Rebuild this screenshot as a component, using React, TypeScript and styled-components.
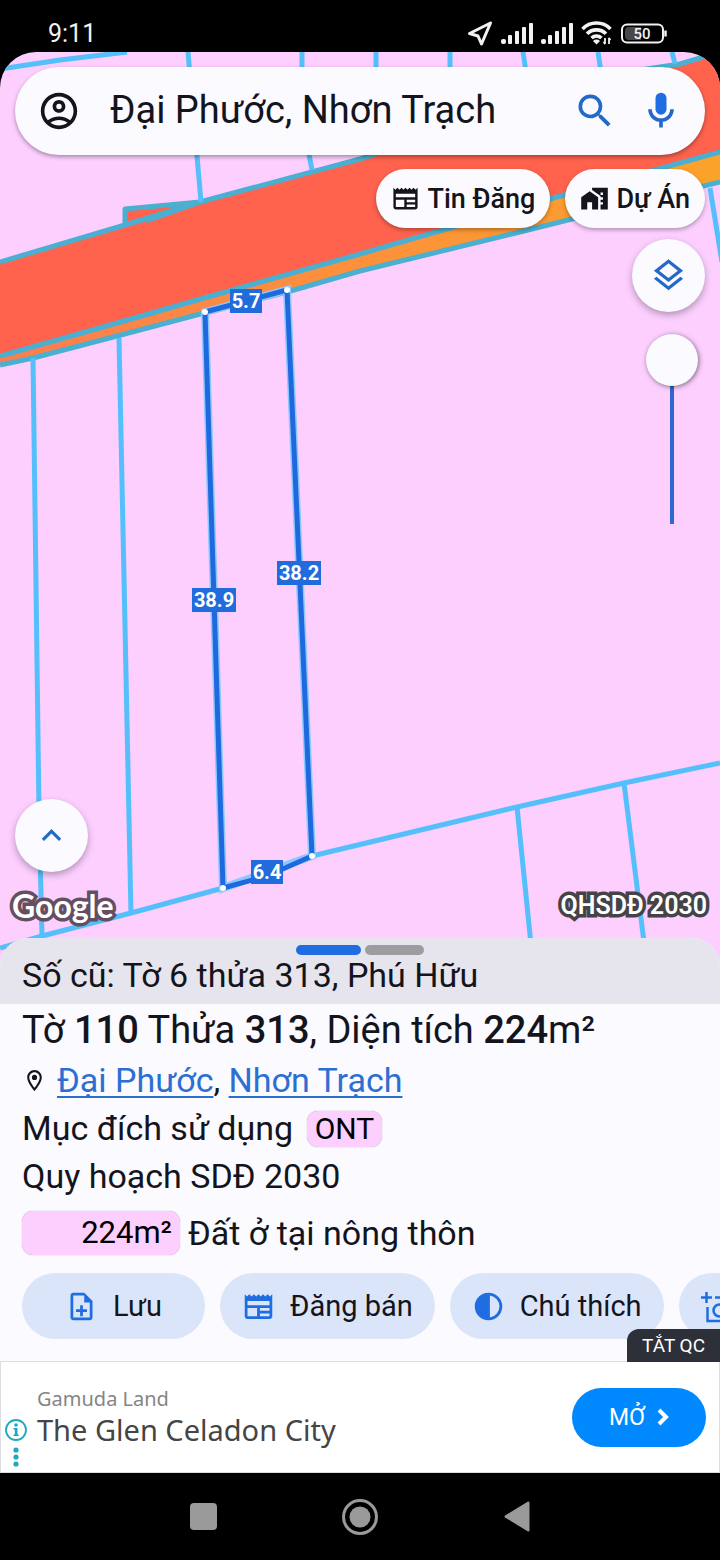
import React from "react";
import styled, { createGlobalStyle } from "styled-components";

const ink = "#14151c";
const blue = "#1f6de0";
const surface = "#fbfaff";

const GlobalStyle = createGlobalStyle`
  *, *::before, *::after { box-sizing: border-box; }
  body { margin: 0; background: #000; color: ${ink}; font-family: Roboto, "Noto Sans", sans-serif; }
  button, input { font: inherit; color: inherit; margin: 0; }
  button { border: 0; padding: 0; cursor: pointer; }
  svg { display: block; flex: none; }
`;

const Screen = styled.div`
  display: flex;
  flex-direction: column;
  min-height: 100vh;
  background: #000;
  overflow-x: hidden;
`;

const StatusBar = styled.header`
  display: flex;
  align-items: center;
  justify-content: space-between;
  height: 52px;
  padding: 14px 52px 0 48px;
  color: #f2f2f2;
`;

const Clock = styled.time`
  padding-top: 2px;
  font-size: 25px;
  line-height: 26px;
`;

const StatusIcons = styled.div`
  display: flex;
  align-items: center;
  gap: 8px;
`;

const MapArea = styled.main`
  position: relative;
  display: flex;
  flex: 1;
  flex-direction: column;
  min-height: 720px;
  padding: 15px 15px 0;
  border-radius: 36px 36px 0 0;
  overflow: hidden;
  background: #fdcfff;
`;

const MapDrawing = styled.svg`
  position: absolute;
  inset: 0;
  width: 100%;
  height: 100%;
`;

const MapTools = styled.div`
  position: relative;
  display: flex;
  flex: 1;
  flex-direction: column;
`;

const SearchBar = styled.form`
  display: flex;
  align-items: center;
  height: 88px;
  padding: 0 22px 0 24px;
  border-radius: 44px;
  background: ${surface};
  box-shadow: 0 2px 4px rgba(0, 0, 0, 0.35);
`;

const SearchInput = styled.input`
  flex: 1;
  min-width: 0;
  height: 56px;
  margin: 0 16px 0 31px;
  padding: 0 0 2px;
  border: 0;
  outline: 0;
  background: transparent;
  font-size: 38px;
`;

const PlainButton = styled.button<{ $gap?: number }>`
  display: flex;
  margin-left: ${(p) => p.$gap ?? 0}px;
  background: transparent;
  color: ${(p) => (p.$gap === undefined ? ink : "#2469c8")};
`;

const FilterRow = styled.div`
  display: flex;
  justify-content: flex-end;
  gap: 15px;
  margin-top: 14px;
`;

const FilterButton = styled.button`
  display: flex;
  align-items: center;
  gap: 7px;
  height: 59px;
  padding: 0 15px;
  border-radius: 30px;
  background: ${surface};
  box-shadow: 0 2px 4px rgba(0, 0, 0, 0.3);
  font-size: 27px;
  font-weight: 500;
`;

const RoundButton = styled.button`
  display: grid;
  place-items: center;
  width: 73px;
  height: 73px;
  border-radius: 50%;
  background: ${surface};
  color: #2469c8;
  box-shadow: 0 3px 7px rgba(0, 0, 0, 0.3);
`;

const SideTools = styled.div`
  display: flex;
  flex-direction: column;
  align-items: flex-end;
  gap: 22px;
  margin-top: 11px;
`;

const OpacitySlider = styled.input`
  appearance: none;
  writing-mode: vertical-lr;
  direction: rtl;
  width: 52px;
  height: 190px;
  margin-right: 7px;
  background: linear-gradient(#2f67cf, #2f67cf) center / 4px 100% no-repeat;
  border-radius: 2px;

  &::-webkit-slider-thumb {
    appearance: none;
    width: 52px;
    height: 52px;
    border-radius: 50%;
    background: ${surface};
    box-shadow: 1px 1px 5px rgba(0, 0, 0, 0.5);
  }
`;

const MapFooter = styled.div`
  display: flex;
  flex-direction: column;
  align-items: flex-start;
  margin-top: auto;
  padding-bottom: 48px;
`;

const Attribution = styled.div`
  display: flex;
  align-items: center;
  justify-content: space-between;
  align-self: stretch;
  height: 40px;
  margin: 14px -2px 0 -3px;
`;

const OutlinedText = styled.span<{ $logo?: boolean }>`
  font-family: ${(p) => (p.$logo ? "Lato, sans-serif" : "Roboto, sans-serif")};
  font-size: ${(p) => (p.$logo ? 32 : 25)}px;
  font-weight: ${(p) => (p.$logo ? 700 : 600)};
  line-height: 40px;
  color: #fff;
  -webkit-text-stroke: ${(p) => (p.$logo ? "7px #625062" : "7px #454248")};
  paint-order: stroke fill;
`;

const Sheet = styled.section`
  position: relative;
  margin-top: -36px;
  border-radius: 28px 28px 0 0;
  overflow: hidden;
  background: ${surface};
`;

const SheetHead = styled.div`
  display: flex;
  flex-direction: column;
  height: 66px;
  padding: 7px 22px 0;
  background: #e6e5ee;
`;

const Pager = styled.div`
  display: flex;
  justify-content: center;
  gap: 4px;
`;

const PagerMark = styled.span<{ $active?: boolean }>`
  width: ${(p) => (p.$active ? 65 : 59)}px;
  height: 10px;
  border-radius: 5px;
  background: ${(p) => (p.$active ? blue : "#9d9da0")};
`;

const Line = styled.p<{ $height: number; $size?: number }>`
  display: flex;
  align-items: center;
  height: ${(p) => p.$height}px;
  margin: 0;
  font-size: ${(p) => p.$size ?? 34}px;
  line-height: 40px;
  white-space: pre;

  & > svg { margin-right: 10px; }
  & > b { font-weight: 500; }
`;

const Details = styled.div`
  padding: 0 22px;
`;

const PlaceLink = styled.a`
  color: #2b6fd3;
  text-decoration: underline;
  text-decoration-thickness: 2px;
  text-decoration-skip-ink: none;
  text-underline-offset: 4px;
`;

const Tag = styled.span<{ $wide?: boolean }>`
  display: flex;
  align-items: center;
  justify-content: flex-end;
  width: ${(p) => (p.$wide ? 158 : 75)}px;
  height: ${(p) => (p.$wide ? 44 : 36)}px;
  margin: ${(p) => (p.$wide ? "0 8px 0 0" : "2px 0 0 14px")};
  padding: 0 8px;
  border-radius: 11px;
  background: #fdcfff;
  color: #000;
  font-size: ${(p) => (p.$wide ? 31 : 30)}px;
  box-shadow: 0 0 1px rgba(60, 30, 60, 0.5);
`;

const ActionRow = styled.div`
  display: flex;
  gap: 15px;
  padding: 8px 0 22px 22px;
  overflow: hidden;
`;

const ActionButton = styled.button<{ $pad?: number }>`
  display: flex;
  flex: none;
  align-items: center;
  gap: 15px;
  height: 66px;
  padding: 0 ${(p) => p.$pad ?? 22}px;
  border-radius: 33px;
  background: #dae5fa;
  font-size: 29px;

  & > svg { color: ${blue}; }
`;

const AdBanner = styled.aside`
  position: relative;
  display: flex;
  align-items: center;
  height: 112px;
  padding: 0 13px 0 3px;
  border: 1px solid #dedde2;
  background: #fff;
`;

const AdMarks = styled.div`
  display: flex;
  flex-direction: column;
  align-items: center;
  align-self: flex-end;
  gap: 6px;
  width: 24px;
  padding-bottom: 5px;
  color: #1aa9bd;
`;

const AdCopy = styled.div`
  flex: 1;
  margin-left: 9px;
  font-family: "Noto Sans", sans-serif;
`;

const Advertiser = styled.div`
  font-size: 20px;
  line-height: 26px;
  color: #858585;
`;

const AdTitle = styled.div`
  font-size: 29px;
  line-height: 36px;
  color: #454545;
`;

const OpenButton = styled.button`
  display: flex;
  align-items: center;
  justify-content: center;
  gap: 12px;
  width: 134px;
  height: 59px;
  border-radius: 30px;
  background: #0088ff;
  color: #fff;
  font-size: 23px;
`;

const CloseAd = styled.button`
  position: absolute;
  right: -1px;
  bottom: 100%;
  height: 33px;
  padding: 0 15px;
  border-radius: 12px 0 0 0;
  background: #2d3039;
  color: #fff;
  font-size: 19px;
`;

const NavBar = styled.nav`
  display: flex;
  align-items: center;
  justify-content: center;
  gap: 119px;
  height: 87px;
  color: #9a9a9a;
`;

const NavButton = styled.button`
  display: grid;
  place-items: center;
  width: 38px;
  height: 38px;
  background: transparent;
`;

type IconProps = { d: string; size: number; box?: string };

const Icon = ({ d, size, box = "0 0 24 24" }: IconProps) => (
  <svg width={size} height={size} viewBox={box} fill="currentColor" fillRule="evenodd" aria-hidden="true">
    <path d={d} />
  </svg>
);

const icons = {
  account:
    "M12 2C6.48 2 2 6.48 2 12s4.48 10 10 10 10-4.48 10-10S17.52 2 12 2zM7.35 18.5C8.66 17.56 10.26 17 12 17s3.34.56 4.65 1.5C15.34 19.44 13.74 20 12 20s-3.34-.56-4.65-1.5zm10.79-1.38C16.45 15.8 14.32 15 12 15s-4.45.8-6.14 2.12A7.96 7.96 0 0 1 4 12c0-4.42 3.58-8 8-8s8 3.58 8 8c0 1.95-.7 3.73-1.86 5.12zM12 6c-1.93 0-3.5 1.57-3.5 3.5S10.07 13 12 13s3.5-1.57 3.5-3.5S13.93 6 12 6zm0 5a1.5 1.5 0 1 1 0-3 1.5 1.5 0 0 1 0 3z",
  search:
    "M15.5 14h-.79l-.28-.27A6.47 6.47 0 0 0 16 9.5 6.5 6.5 0 1 0 9.5 16c1.61 0 3.09-.59 4.23-1.57l.27.28v.79l5 4.99L20.49 19l-4.99-5zm-6 0a4.5 4.5 0 1 1 0-9 4.5 4.5 0 0 1 0 9z",
  news: "M22 3l-1.67 1.67L18.67 3 17 4.67 15.33 3l-1.66 1.67L12 3l-1.67 1.67L8.67 3 7 4.67 5.33 3 3.67 4.67 2 3v16c0 1.1.9 2 2 2h16c1.1 0 2-.9 2-2V3zM11 19H4v-6h7v6zm9 0h-7v-2h7v2zm0-4h-7v-2h7v2zm0-4H4V8h16v3z",
  house:
    "M1 11v10h5v-6h4v6h5V11L8 6zM10 3v1.97l7 5V11h2v2h-2v2h2v2h-2v4h6V3zm9 6h-2V7h2z",
  layers:
    "M11.99 18.54l-7.37-5.73L3 14.07l9 7 9-7-1.63-1.27zM12 16l7.36-5.73L21 9l-9-7-9 7 1.63 1.27zm0-11.47L17.74 9 12 13.47 6.26 9z",
  up: "M7.41 15.41L12 10.83l4.59 4.58L18 14l-6-6-6 6z",
  place:
    "M12 2C8.13 2 5 5.13 5 9c0 5.25 7 13 7 13s7-7.75 7-13c0-3.87-3.13-7-7-7zM7 9c0-2.76 2.24-5 5-5s5 2.24 5 5c0 2.88-2.88 7.19-5 9.88C9.92 16.21 7 11.85 7 9zM12 6.5a2.5 2.5 0 1 0 0 5 2.5 2.5 0 0 0 0-5z",
  note: "M14 2H6c-1.1 0-2 .9-2 2v16c0 1.1.9 2 2 2h12c1.1 0 2-.9 2-2V8l-6-6zm4 18H6V4h8v5h4v11zM11 11h2v3h3v2h-3v3h-2v-3H8v-2h3z",
  contrast:
    "M12 2a10 10 0 1 0 0 20 10 10 0 0 0 0-20zm1 2.07A8 8 0 0 1 13 19.93z",
};

const MicIcon = () => (
  <svg width="44" height="44" viewBox="0 0 24 24" aria-hidden="true">
    <rect x="9" y="2" width="6" height="12" rx="3" fill="#1f6de0" />
    <path
      d="M17 11c0 2.76-2.24 5-5 5s-5-2.24-5-5H5c0 3.53 2.61 6.43 6 6.920V21h2v-3.080c3.390-.490 6-3.390 6-6.920z"
      fill="currentColor"
    />
  </svg>
);

const CameraIcon = () => (
  <svg width="33" height="33" viewBox="0 0 33 33" fill="none" stroke="currentColor" strokeWidth="2.500" aria-hidden="true">
    <path d="M0 7.500H11M5.500 2V13M14 7.500h7l3 4h7v19.500H6.500V17" />
    <circle cx="18.500" cy="20.500" r="6" />
  </svg>
);

const SignalBars = () => (
  <svg width="32" height="21" viewBox="0 0 32 21" fill="currentColor" aria-hidden="true">
    <rect x="0" y="16" width="5" height="5" rx="2" />
    <rect x="7" y="12" width="4" height="9" rx="1" />
    <rect x="14" y="8" width="4" height="13" rx="1" />
    <rect x="21" y="4" width="4" height="17" rx="1" />
    <rect x="28" y="0" width="4" height="21" rx="1" />
  </svg>
);

const Handset = () => (
  <StatusIcons>
    <svg width="26" height="25" viewBox="0 0 26 25" fill="none" stroke="currentColor" strokeWidth="3" strokeLinejoin="round" aria-hidden="true">
      <path d="M23.500 2L2.500 12.500l8.500 2.500 3.500 8z" />
    </svg>
    <SignalBars />
    <SignalBars />
    <svg width="31" height="24" viewBox="0 0 31 24" fill="none" stroke="currentColor" strokeWidth="3.600" aria-hidden="true">
      <path d="M1.500 8a19.500 19.500 0 0 1 28 0M6 12.800a13.500 13.500 0 0 1 19 0M10.500 17a7.500 7.500 0 0 1 10 0" />
      <path d="M12 20a5 5 0 0 1 7 0l-3.500 3.500z" fill="currentColor" stroke="none" />
      <path d="M24 17v6M28 17v6M22.500 21l2 2M29.500 19l-2-2" strokeWidth="1.800" />
    </svg>
    <svg width="48" height="21" viewBox="0 0 48 21" aria-label="50%">
      <rect x="2" y="1.500" width="41" height="18" rx="5" fill="none" stroke="currentColor" strokeWidth="2" />
      <path d="M9 4h12v13H9a4 4 0 0 1-4-4V8a4 4 0 0 1 4-4z" fill="#484848" />
      <path d="M45.500 7.500v6" stroke="currentColor" strokeWidth="2.500" />
      <text x="22" y="16" textAnchor="middle" fontSize="15" fontWeight="500" fill="currentColor">50</text>
    </svg>
  </StatusIcons>
);

const measures = [
  { x: 246, y: 249, w: 32, text: "5.7" },
  { x: 214, y: 548, w: 44, text: "38.9" },
  { x: 299, y: 521, w: 44, text: "38.2" },
  { x: 267, y: 820, w: 32, text: "6.4" },
];

const corners = [
  [205, 260],
  [287, 238],
  [312, 804],
  [223, 836],
];

const ParcelMap = () => (
  <MapDrawing viewBox="0 0 720 922" preserveAspectRatio="xMidYMin slice" role="img" aria-label="Bản đồ thửa đất">
    <defs>
      <linearGradient id="verge">
        <stop offset="0" stopColor="#fb7d50" />
        <stop offset="0.45" stopColor="#fd8f3c" />
        <stop offset="1" stopColor="#fba32a" />
      </linearGradient>
    </defs>
    <path d="M0 210L125 173V155L200 150L360 107L640 18L680 12L720 0V100L557 145L360 201L0 305z" fill="#ff624d" />
    <path d="M0 305L117 272L204 247L360 202L557 145L720 100V130L540 175L360 219L287 240L204 261L0 313z" fill="url(#verge)" />
    <g fill="none" stroke="#4aafd0" strokeWidth="5" strokeLinejoin="round">
      <path d="M0 210L125 173L200 150L360 107L560 42L640 18L680 12L720 0" />
      <path d="M125 175V157L200 150M146 169L200 150" />
      <path d="M0 304L117 271L204 246L360 202L557 145L720 100" />
      <path d="M0 313L33 306L117 284L204 261L287 240L360 219L520 180L720 130" />
    </g>
    <g fill="none" stroke="#54bffa" strokeWidth="5">
      <path d="M0 17L60 8L127 0M188 0L201 150M302 0V66L312 118M376 0V20M450 0V20M523 0L526 20M598 0L601 20" />
      <path d="M672 0L675 12" />
      <path d="M33 306L39 760L42 884M119 286L131 862" />
      <path d="M0 896L42 884L131 861L223 836L312 804L517 755L624 731L720 711" />
      <path d="M517 755L534 922M624 731L648 922M710 136L722 210" />
    </g>
    <path d="M205 260L287 238L312 804L223 836z" fill="none" stroke="#8cc8ff" strokeWidth="8" />
    <path d="M205 260L287 238L312 804L267 824L223 836z" fill="none" stroke="#1e69dd" strokeWidth="5" strokeLinejoin="round" />
    {corners.map(([x, y]) => (
      <circle key={`${x}-${y}`} cx={x} cy={y} r="3" fill="#fff" />
    ))}
    {measures.map((m) => (
      <g key={m.text}>
        <rect x={m.x - m.w / 2} y={m.y - 12} width={m.w} height="24" fill="#226bdc" />
        <text x={m.x} y={m.y + 7} textAnchor="middle" fontSize="20" fontWeight="700" fill="#fff">
          {m.text}
        </text>
      </g>
    ))}
  </MapDrawing>
);

export default function App() {
  return (
    <Screen>
      <GlobalStyle />
      <StatusBar>
        <Clock>9:11</Clock>
        <Handset />
      </StatusBar>

      <MapArea>
        <ParcelMap />
        <MapTools>
          <SearchBar onSubmit={(e) => e.preventDefault()}>
            <PlainButton type="button" aria-label="Tài khoản">
              <Icon d={icons.account} size={40} box="1 1 22 22" />
            </PlainButton>
            <SearchInput aria-label="Tìm kiếm" defaultValue="Đại Phước, Nhơn Trạch" />
            <PlainButton type="submit" $gap={0} aria-label="Tìm">
              <Icon d={icons.search} size={44} />
            </PlainButton>
            <PlainButton type="button" $gap={22} aria-label="Giọng nói">
              <MicIcon />
            </PlainButton>
          </SearchBar>

          <FilterRow>
            <FilterButton type="button">
              <Icon d={icons.news} size={29} />
              Tin Đăng
            </FilterButton>
            <FilterButton type="button">
              <Icon d={icons.house} size={29} />
              Dự Án
            </FilterButton>
          </FilterRow>

          <SideTools>
            <RoundButton type="button" aria-label="Lớp bản đồ">
              <Icon d={icons.layers} size={39} />
            </RoundButton>
            <OpacitySlider type="range" min={0} max={100} defaultValue={100} aria-label="Độ mờ lớp bản đồ" />
          </SideTools>

          <MapFooter>
            <RoundButton type="button" aria-label="Mở rộng">
              <Icon d={icons.up} size={39} />
            </RoundButton>
            <Attribution>
              <OutlinedText $logo>Google</OutlinedText>
              <OutlinedText>QHSDĐ 2030</OutlinedText>
            </Attribution>
          </MapFooter>
        </MapTools>
      </MapArea>

      <Sheet>
        <SheetHead>
          <Pager>
            <PagerMark $active />
            <PagerMark />
          </Pager>
          <Line $height={40}>Số cũ: Tờ 6 thửa 313, Phú Hữu</Line>
        </SheetHead>
        <Details>
          <Line $height={52} $size={38}>
            Tờ <b>110</b> Thửa <b>313</b>, Diện tích <b>224</b>m²
          </Line>
          <Line $height={48}>
            <Icon d={icons.place} size={25} />
            <PlaceLink href="#dai-phuoc">Đại Phước</PlaceLink>
            {", "}
            <PlaceLink href="#nhon-trach">Nhơn Trạch</PlaceLink>
          </Line>
          <Line $height={48}>
            Mục đích sử dụng
            <Tag>ONT</Tag>
          </Line>
          <Line $height={48}>Quy hoạch SDĐ 2030</Line>
          <Line $height={65}>
            <Tag $wide>224m²</Tag>
            Đất ở tại nông thôn
          </Line>
        </Details>
        <ActionRow>
          <ActionButton type="button" $pad={43}>
            <Icon d={icons.note} size={33} />
            Lưu
          </ActionButton>
          <ActionButton type="button">
            <Icon d={icons.news} size={33} />
            Đăng bán
          </ActionButton>
          <ActionButton type="button">
            <Icon d={icons.contrast} size={33} />
            Chú thích
          </ActionButton>
          <ActionButton type="button" aria-label="Chụp ảnh">
            <CameraIcon />
          </ActionButton>
        </ActionRow>
      </Sheet>

      <AdBanner>
        <CloseAd type="button">TẮT QC</CloseAd>
        <AdMarks>
          <svg width="22" height="22" viewBox="0 0 22 22" aria-hidden="true">
            <circle cx="11" cy="11" r="10" fill="none" stroke="currentColor" strokeWidth="1.800" />
            <circle cx="11" cy="6" r="1.800" fill="currentColor" />
            <path d="M8.500 9h4v6.500h1.200V17H8.500v-1.500h1.300v-5H8.500z" fill="currentColor" />
          </svg>
          <svg width="6" height="20" viewBox="0 0 6 20" fill="currentColor" aria-hidden="true">
            <circle cx="3" cy="3" r="2.600" />
            <circle cx="3" cy="10" r="2.600" />
            <circle cx="3" cy="17" r="2.600" />
          </svg>
        </AdMarks>
        <AdCopy>
          <Advertiser>Gamuda Land</Advertiser>
          <AdTitle>The Glen Celadon City</AdTitle>
        </AdCopy>
        <OpenButton type="button">
          MỞ
          <svg width="12" height="18" viewBox="0 0 12 18" fill="none" stroke="currentColor" strokeWidth="4" aria-hidden="true">
            <path d="M2 2l7 7-7 7" />
          </svg>
        </OpenButton>
      </AdBanner>

      <NavBar>
        <NavButton type="button" aria-label="Ứng dụng gần đây">
          <svg width="27" height="27" viewBox="0 0 27 27" fill="currentColor">
            <rect width="27" height="27" rx="4" />
          </svg>
        </NavButton>
        <NavButton type="button" aria-label="Màn hình chính">
          <svg width="36" height="36" viewBox="0 0 36 36" fill="currentColor">
            <circle cx="18" cy="18" r="16.500" fill="none" stroke="currentColor" strokeWidth="3" />
            <circle cx="18" cy="18" r="10.500" />
          </svg>
        </NavButton>
        <NavButton type="button" aria-label="Quay lại">
          <svg width="26" height="31" viewBox="0 0 26 31" fill="currentColor">
            <path d="M24 0.500Q25.500 0 25.500 2V29Q25.500 31 24 30.500L1 16.500Q0 15.500 1 14.500z" />
          </svg>
        </NavButton>
      </NavBar>
    </Screen>
  );
}
